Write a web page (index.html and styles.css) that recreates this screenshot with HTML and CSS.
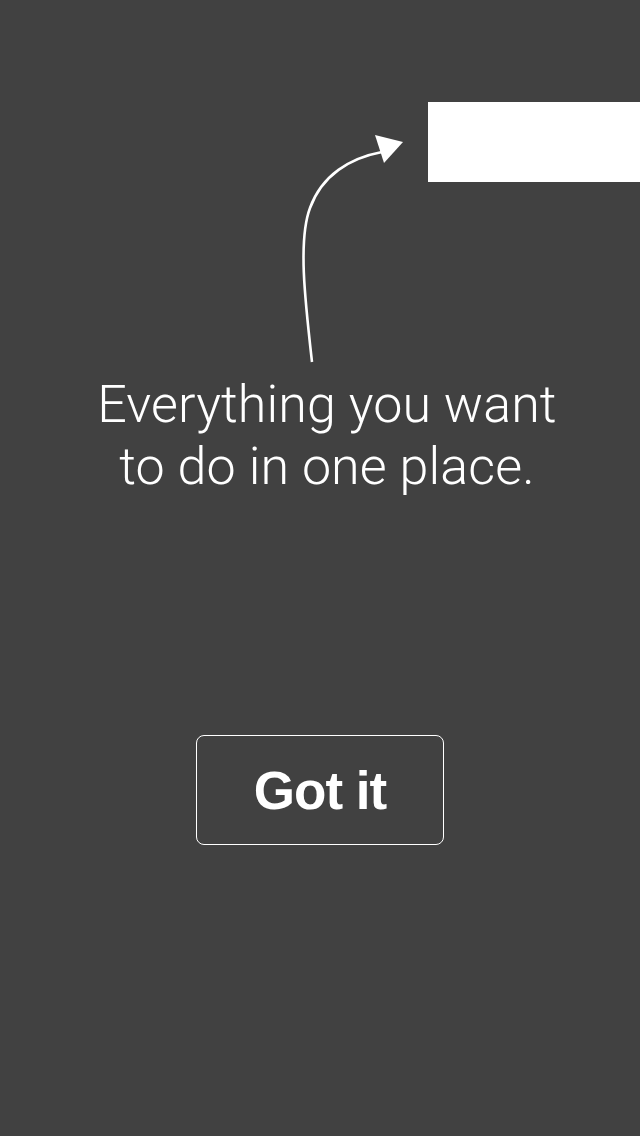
FILE: index.html
```html
<!DOCTYPE html>
<html lang="en">
<head>
<meta charset="utf-8">
<title>Tip</title>
<link rel="stylesheet" href="styles.css">
</head>
<body>
<main class="screen">
  <div class="spot-row">
    <div class="spot"></div>
  </div>
  <svg class="arrow" width="640" height="400" viewBox="0 0 640 400" aria-hidden="true">
    <path d="M312 362 C305 300 298 240 310 208 C322 175 350 158 382 152" fill="none" stroke="#fff" stroke-width="2.6"/>
    <polygon points="375,135 403,142 384,163" fill="#fff"/>
  </svg>
  <p class="message">Everything you want<br>to do in one place.</p>
  <button class="got-it" type="button">Got it</button>
</main>
</body>
</html>
```
FILE: styles.css
```css
html, body {
  margin: 0;
  padding: 0;
  background: #414141;
}

.screen {
  position: relative;
  width: 640px;
  height: 1136px;
  display: flex;
  flex-direction: column;
  align-items: center;
  overflow: hidden;
}

.spot-row {
  align-self: stretch;
  display: flex;
  justify-content: flex-end;
  padding-top: 102px;
}

.spot {
  width: 212px;
  height: 80px;
  background: #fff;
}

.arrow {
  position: absolute;
  left: 0;
  top: 0;
}

.message {
  margin: 192px 0 0;
  padding-left: 14px;
  font-family: Roboto, "Liberation Sans", sans-serif;
  font-weight: 300;
  font-size: 52px;
  line-height: 62px;
  color: #fff;
  text-align: center;
  letter-spacing: 0.1px;
}

.got-it {
  margin-top: 237px;
  width: 248px;
  height: 110px;
  box-sizing: border-box;
  border: 1px solid #fff;
  border-radius: 8px;
  background: transparent;
  color: #fff;
  font-family: "Liberation Sans", Arial, sans-serif;
  font-weight: 700;
  font-size: 53px;
  letter-spacing: -1px;
  padding: 0;
  cursor: pointer;
}
```
